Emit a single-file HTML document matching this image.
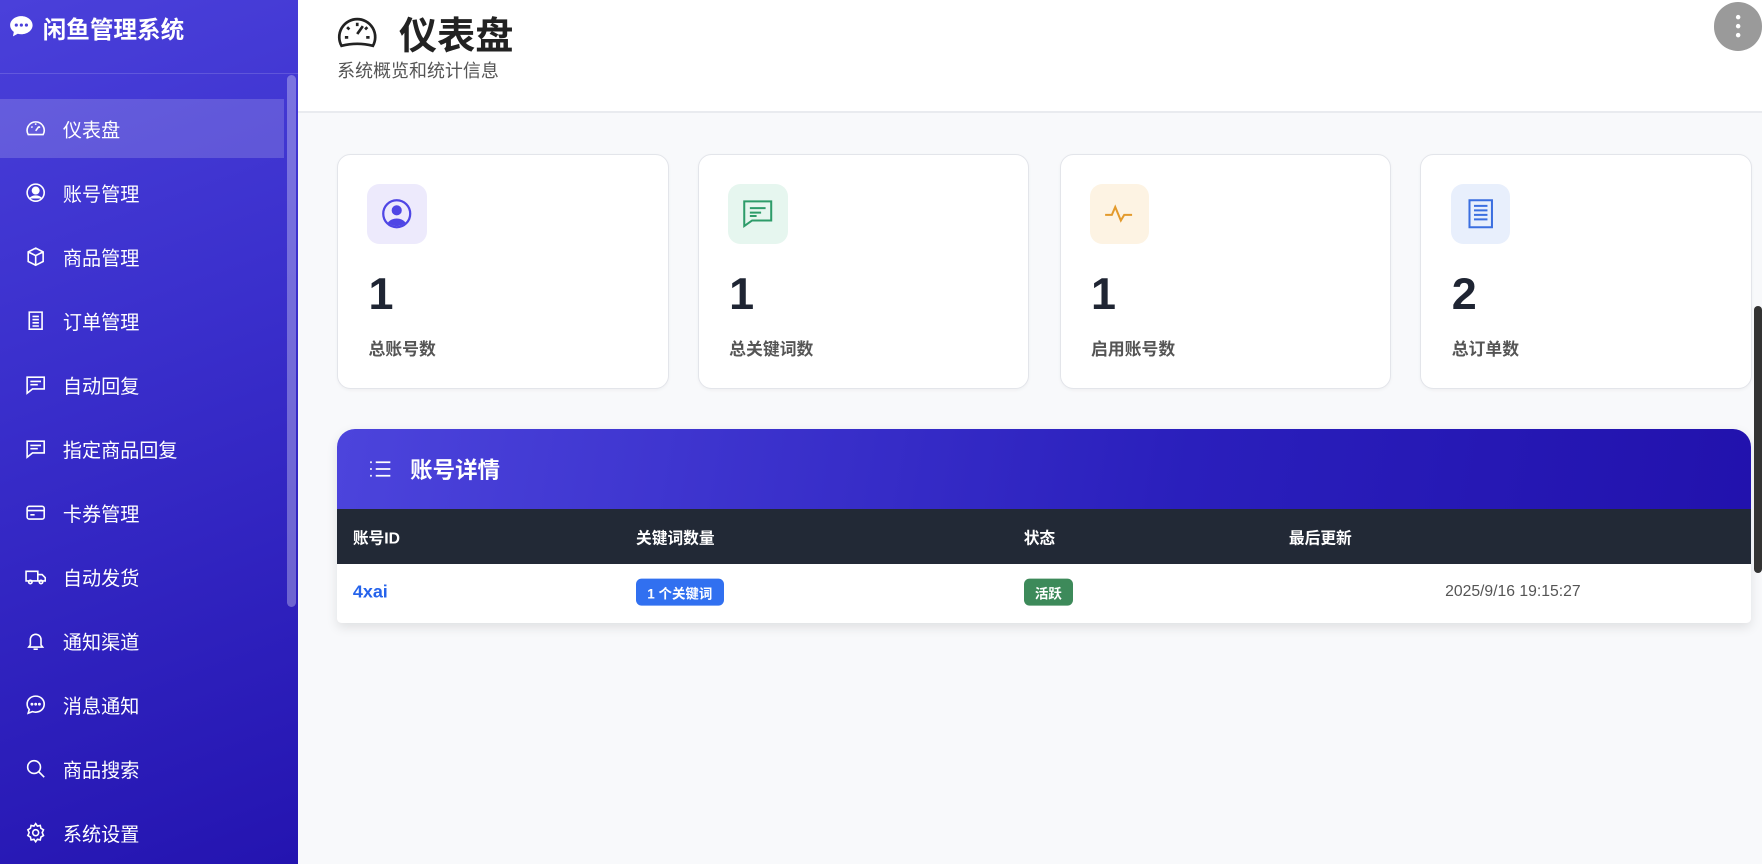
<!DOCTYPE html>
<html><head><meta charset="utf-8"><style>
*{margin:0;padding:0;box-sizing:border-box}
html,body{width:1762px;height:864px;overflow:hidden}
body{background:#f8f9fb;font-family:"Liberation Sans","Noto Sans CJK SC",sans-serif}
#w{width:1568px;height:769px;position:relative;zoom:1.12372;overflow:hidden}
.sb{position:absolute;left:0;top:0;width:265px;height:769px;background:linear-gradient(160deg,#4a40da 0%,#3a2fcc 40%,#2414b0 100%);color:#fff}
.sb .hd{height:66px;border-bottom:1px solid rgba(255,255,255,.15);display:flex;align-items:flex-start;padding:10px 0 0 8px;font-size:21px;font-weight:bold}
.sb .hd svg{margin-right:8px;margin-top:3px}
.scr{position:absolute;left:255px;top:67px;width:8px;height:473px;background:rgba(255,255,255,.3);border-radius:4px}
.nav{position:absolute;top:88px;left:0;width:253px}
.it{height:57px;display:flex;align-items:center;padding-left:22px;font-size:17px}
.it.a{background:rgba(255,255,255,.17);height:53px;margin-bottom:2px}
.it svg{width:19px;height:19px;margin-right:15px;fill:none;stroke:#fff;stroke-width:1.5}
.mh{position:absolute;left:265px;top:0;right:0;height:101px;background:#fff;border-bottom:2px solid #e9ebef}
.ttl{position:absolute;left:355px;top:5px;font-size:34px;font-weight:bold;color:#222}
.sub{position:absolute;left:300px;top:51px;font-size:16px;color:#555}
.dot{position:absolute;left:1525px;top:2px;width:43px;height:43px;border-radius:50%;background:#9a9a9a}
.card{position:absolute;top:137px;width:295px;height:209px;background:#fff;border:1px solid #e3e5ea;border-radius:12px;box-shadow:0 1px 3px rgba(0,0,0,.04)}
.ib{position:absolute;left:26px;top:26px;width:53px;height:53px;border-radius:11px;display:flex;align-items:center;justify-content:center}
.num{position:absolute;left:27px;top:101px;font-size:40px;font-weight:900;color:#1f2533}
.lb{position:absolute;left:27px;top:160px;font-size:15px;color:#555;font-weight:bold}
.tb{position:absolute;left:300px;top:382px;width:1258px;height:172px;background:#fff;border-radius:16px 16px 4px 4px;box-shadow:0 4px 10px rgba(0,0,0,.1);overflow:hidden}
.th{height:71px;background:linear-gradient(100deg,#4c44dc,#2a1fbc 60%,#2212ad);color:#fff;font-size:20px;font-weight:bold;display:flex;align-items:center;padding-left:28px}
.thh{height:49px;background:#222936;color:#fff;font-size:14px;font-weight:bold;position:relative}
.thh span,.row span{position:absolute;top:50%;transform:translateY(-50%)}
.row{height:50px;position:relative;font-size:14px}
.bd{color:#fff;font-size:12px;font-weight:bold;padding:3px 10px;border-radius:5px}
.vs{position:absolute;left:1561px;top:272px;width:7px;height:238px;background:#333;border-radius:4px}
</style></head><body><div id="w">
<div class="sb">
<div class="hd"><svg width="22" height="20" viewBox="0 0 22 20"><path d="M11 1C5.5 1 1 4.6 1 9c0 2.4 1.3 4.5 3.3 6L3.5 19l4.3-2.3c1 .3 2.1.4 3.2.4 5.5 0 10-3.6 10-8S16.5 1 11 1z" fill="#fff"/><circle cx="6.5" cy="9" r="1.4" fill="#4a40da"/><circle cx="11" cy="9" r="1.4" fill="#4a40da"/><circle cx="15.5" cy="9" r="1.4" fill="#4a40da"/></svg>闲鱼管理系统</div>
<div class="scr"></div>
<div class="nav">
<div class="it a"><svg viewBox="0 0 20 20"><path d="M3 15.5a8 8 0 1 1 14 0z"/><path d="M10 12l3-4M6 8l1 1M10 5v1.5M14 8l-1 1"/></svg>仪表盘</div>
<div class="it"><svg viewBox="0 0 20 20"><circle cx="10" cy="10" r="8"/><circle cx="10" cy="8" r="3" fill="#fff"/><path d="M4.5 15.5c3-3 8-3 11 0" fill="#fff"/></svg>账号管理</div>
<div class="it"><svg viewBox="0 0 20 20"><path d="M10 2l7 3.5v9L10 18l-7-3.5v-9zM3 5.5L10 9l7-3.5M10 9v9"/></svg>商品管理</div>
<div class="it"><svg viewBox="0 0 20 20"><path d="M4 2h12v16H4zM7 6h6M7 9h6M7 12h6M7 15h6"/></svg>订单管理</div>
<div class="it"><svg viewBox="0 0 20 20"><path d="M2 3h16v11H7l-5 4zM5 7h10M5 10h7"/></svg>自动回复</div>
<div class="it"><svg viewBox="0 0 20 20"><path d="M2 3h16v11H7l-5 4zM5 7h10M5 10h7"/></svg>指定商品回复</div>
<div class="it"><svg viewBox="0 0 20 20"><rect x="2" y="4" width="16" height="12" rx="2"/><path d="M2 8h16M5 12h4"/></svg>卡券管理</div>
<div class="it"><svg viewBox="0 0 20 20"><path d="M1 5h11v9H1zM12 8h4l3 3v3h-7"/><circle cx="5" cy="15" r="1.6"/><circle cx="15" cy="15" r="1.6"/></svg>自动发货</div>
<div class="it"><svg viewBox="0 0 20 20"><path d="M5 14V9a5 5 0 0 1 10 0v5l1.5 2h-13zM8 18h4"/></svg>通知渠道</div>
<div class="it"><svg viewBox="0 0 20 20"><path d="M10 2c4.4 0 8 3.1 8 7.5S14.4 17 10 17c-1 0-2-.2-3-.5L3 18l1-3.5C2.7 13.1 2 11.4 2 9.5 2 5.1 5.6 2 10 2z"/><circle cx="6.5" cy="9.5" r=".6"/><circle cx="10" cy="9.5" r=".6"/><circle cx="13.5" cy="9.5" r=".6"/></svg>消息通知</div>
<div class="it"><svg viewBox="0 0 20 20"><circle cx="8.5" cy="8.5" r="6"/><path d="M13 13l5 5"/></svg>商品搜索</div>
<div class="it"><svg viewBox="0 0 20 20"><circle cx="10" cy="10" r="2.8"/><path d="M10 1.5l1.6 2.3 2.7-.6.6 2.7 2.4 1.4-1.2 2.7 1.2 2.7-2.4 1.4-.6 2.7-2.7-.6L10 18.5l-1.6-2.3-2.7.6-.6-2.7-2.4-1.4L3.9 10 2.7 7.3l2.4-1.4.6-2.7 2.7.6z"/></svg>系统设置</div>
</div></div>
<div class="mh"></div>
<svg style="position:absolute;left:300px;top:14px" width="36" height="29" viewBox="0 0 36 29" fill="none" stroke="#222" stroke-width="2.4"><path d="M4 26.5A16 16 0 1 1 32 26.5Q18 23 4 26.5z"/><path d="M18 16l5-7M9 10l2 2M18 6v3M27 10l-2 2M7 19h3M26 19h3"/></svg>
<div class="ttl">仪表盘</div>
<div class="sub">系统概览和统计信息</div>
<div class="dot"><svg width="43" height="43" viewBox="0 0 43 43"><circle cx="21.5" cy="13.5" r="2" fill="#fff"/><circle cx="21.5" cy="21.5" r="2" fill="#fff"/><circle cx="21.5" cy="29.5" r="2" fill="#fff"/></svg></div>
<div class="card" style="left:300px"><div class="ib" style="background:#edeafc"><svg width="28" height="28" viewBox="0 0 28 28"><circle cx="14" cy="14" r="12" fill="none" stroke="#4f46e5" stroke-width="2"/><circle cx="14" cy="11" r="4.5" fill="#4f46e5"/><path d="M6 22c4-5 12-5 16 0a12 12 0 0 1-16 0z" fill="#4f46e5"/></svg></div><div class="num">1</div><div class="lb">总账号数</div></div>
<div class="card" style="left:621px"><div class="ib" style="background:#e6f6ef"><svg width="28" height="28" viewBox="0 0 28 28" fill="none" stroke="#2e9c6a" stroke-width="1.8"><path d="M2 3h24v17H9l-7 5zM7 9h14M7 13h10M7 16h6"/></svg></div><div class="num">1</div><div class="lb">总关键词数</div></div>
<div class="card" style="left:943px"><div class="ib" style="background:#fdf3e3"><svg width="28" height="28" viewBox="0 0 28 28" fill="none" stroke="#e39a2c" stroke-width="1.8"><path d="M1 15h6l3-7 5 12 3-5h7"/></svg></div><div class="num">1</div><div class="lb">启用账号数</div></div>
<div class="card" style="left:1264px"><div class="ib" style="background:#e8effc"><svg width="28" height="28" viewBox="0 0 28 28" fill="none" stroke="#3b6fe0" stroke-width="1.8"><path d="M4 2h20v24H4zM8 7h12M8 11h12M8 15h12M8 19h12"/></svg></div><div class="num">2</div><div class="lb">总订单数</div></div>
<div class="tb">
<div class="th"><svg width="20" height="16" viewBox="0 0 20 16" fill="none" stroke="#fff" stroke-width="1.6" style="margin-right:17px"><path d="M1 2h1.5M1 8h1.5M1 14h1.5M6 2h13M6 8h13M6 14h13"/></svg>账号详情</div>
<div class="thh"><span style="left:14px">账号ID</span><span style="left:266px">关键词数量</span><span style="left:611px">状态</span><span style="left:847px">最后更新</span></div>
<div class="row"><span style="left:14px;color:#2563eb;font-weight:bold;font-size:16px">4xai</span><span class="bd" style="left:266px;background:#3170f0">1 个关键词</span><span class="bd" style="left:611px;background:#3d8a5a">活跃</span><span style="left:986px;color:#555">2025/9/16 19:15:27</span></div>
</div>
<div class="vs"></div>
</div></body></html>
